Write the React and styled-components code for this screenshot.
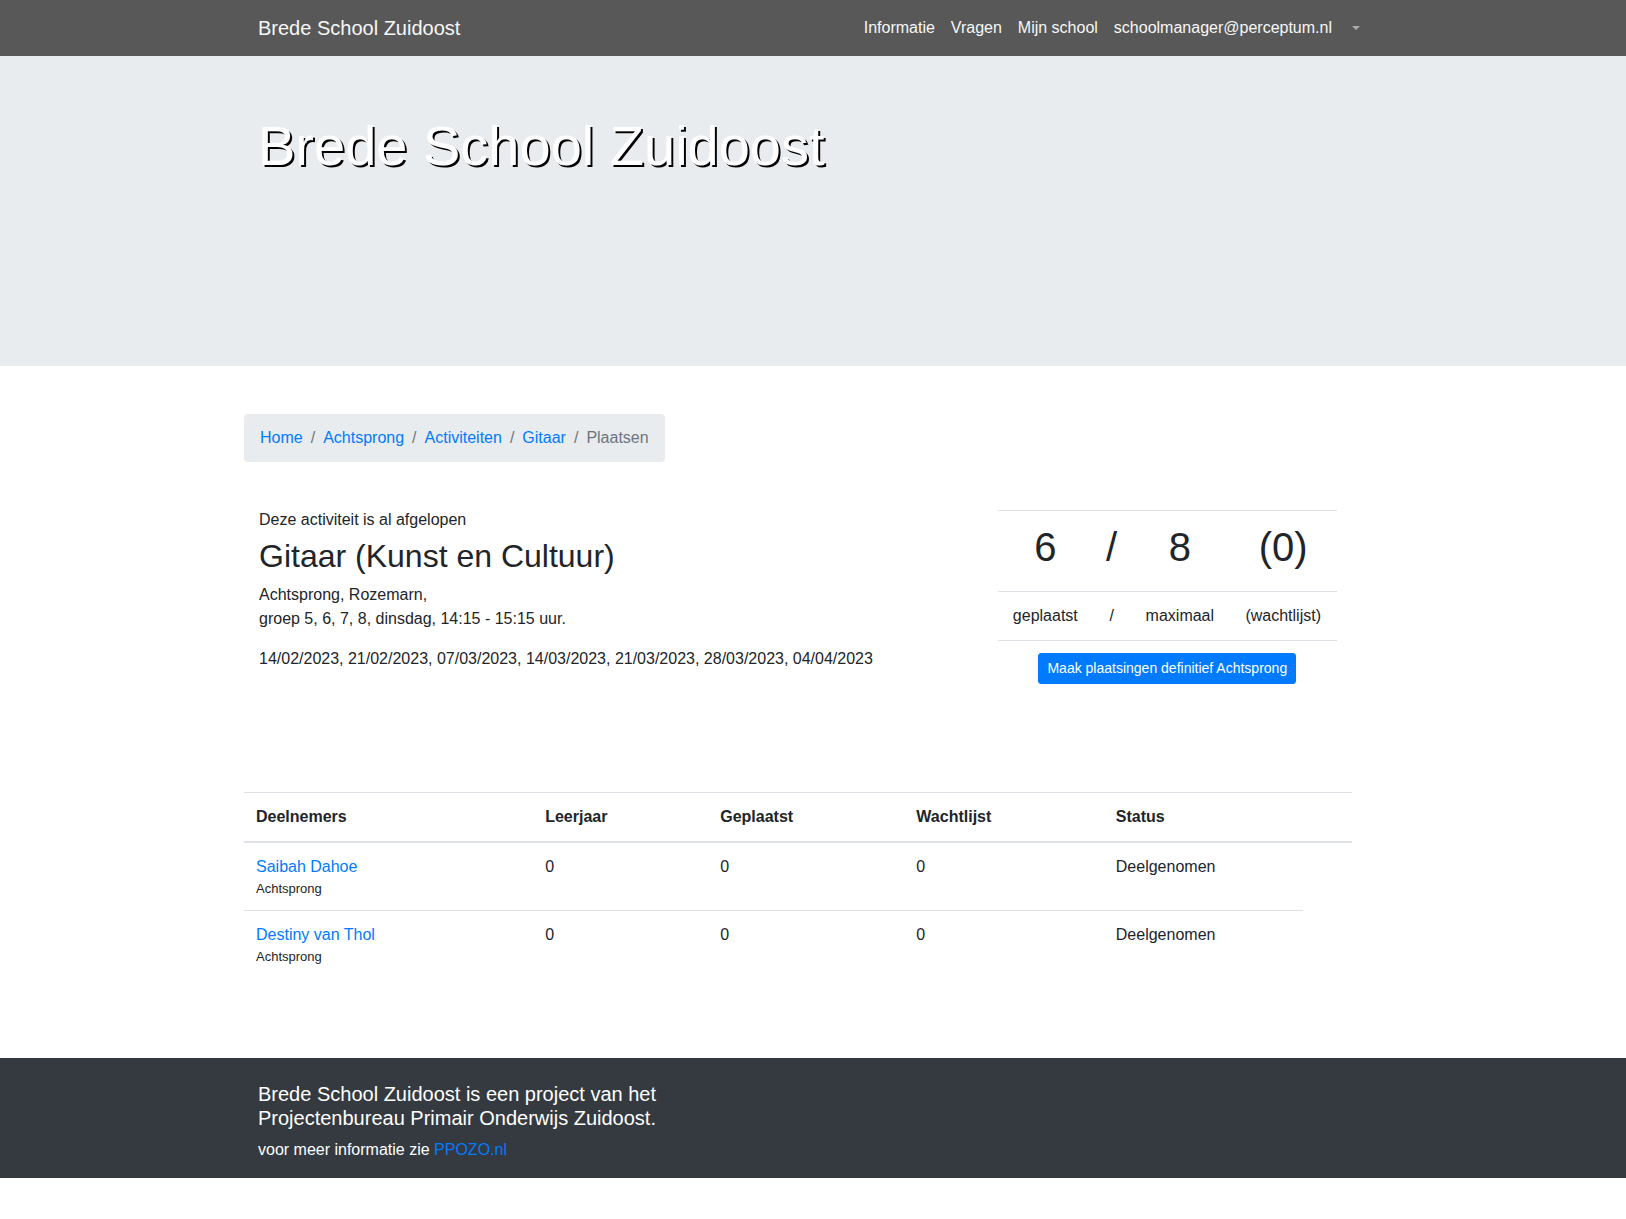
import React from "react";
import styled, { createGlobalStyle } from "styled-components";

const GlobalStyle = createGlobalStyle`
  *, *::before, *::after { box-sizing: border-box; }
  body {
    margin: 0;
    background: #fff;
    color: #212529;
    font-family: "Liberation Sans", Arial, sans-serif;
    font-size: 16px;
    line-height: 24px;
  }
`;

const Container = styled.div`
  width: 100%;
  max-width: 1140px;
  margin: 0 auto;
  padding: 0 ${(p) => p.$gutter || 15}px;
`;

const Navbar = styled.nav`
  background: #585858;
  padding: 8px 0;
`;

const NavInner = styled(Container)`
  display: flex;
  align-items: center;
  justify-content: space-between;
`;

const Brand = styled.a`
  color: #f7f7f7;
  font-size: 20px;
  line-height: 30px;
  text-decoration: none;
`;

const NavList = styled.ul`
  display: flex;
  margin: 0;
  padding: 0;
  list-style: none;
`;

const NavLink = styled.a`
  display: block;
  padding: 8px;
  color: #f7f7f7;
  text-decoration: none;
`;

const MenuToggle = styled.button`
  display: flex;
  align-items: center;
  height: 40px;
  padding: 0 8px 0 12px;
  border: 0;
  background: none;
  color: #ababab;
  cursor: pointer;

  &::after {
    content: "";
    border-top: 4px solid;
    border-left: 4px solid transparent;
    border-right: 4px solid transparent;
  }
`;

const Hero = styled.header`
  min-height: 310px;
  padding: 56px 0;
  background: #e9ecef;
`;

const HeroTitle = styled.h1`
  margin: 0;
  color: #fff;
  font-size: 56px;
  font-weight: 300;
  line-height: 67px;
  text-shadow: 2px 2px #000;
`;

const Main = styled.main`
  padding: 48px 0 80px;
`;

const Row = styled.div`
  display: flex;
  flex-wrap: wrap;
  width: 100%;
  margin: 0 0 ${(p) => p.$space || 0}px -15px;
`;

const Breadcrumb = styled.ol`
  display: flex;
  flex-wrap: wrap;
  margin: 0;
  padding: 12px 16px;
  border-radius: 4px;
  background: #e9ecef;
  list-style: none;
`;

const Crumb = styled.li`
  color: #6c757d;

  & + &::before {
    content: "/";
    padding: 0 8px;
  }
`;

const Link = styled.a`
  color: #007bff;
  text-decoration: none;
`;

const Column = styled.div`
  width: calc(100% * ${(p) => p.$span} / 12);
  padding: ${(p) => p.$top || 0}px 15px 0;
`;

const Notice = styled.p`
  margin: 0 0 5px;
`;

const Title = styled.h2`
  margin: 0 0 8px;
  font-size: 32px;
  font-weight: 500;
  line-height: 38px;
`;

const Paragraph = styled.p`
  margin: 0 0 16px;
`;

const Table = styled.table`
  width: 100%;
  border-collapse: separate;
  border-spacing: 0;
  text-align: ${(p) => p.$align || "left"};
`;

const Col = styled.col`
  width: ${(p) => p.$width}%;
`;

const Cell = styled.td`
  padding: 12px;
  border-top: 1px solid #dee2e6;
  vertical-align: top;

  thead + tbody tr:first-child & {
    border-top: 0;
  }
`;

const HeadCell = styled(Cell)`
  border-bottom: 2px solid #dee2e6;
  font-weight: 700;
`;

const Count = styled.div`
  margin-bottom: 8px;
  font-size: 40px;
  line-height: 48px;
`;

const PrimaryButton = styled.button`
  display: block;
  margin: 0 auto;
  padding: 4px 8px;
  border: 1px solid #007bff;
  border-radius: 3px;
  background: #007bff;
  color: #fff;
  font-family: inherit;
  font-size: 14px;
  line-height: 21px;
  cursor: pointer;
`;

const Small = styled.div`
  font-size: 13px;
  line-height: 19px;
`;

const Footer = styled.footer`
  padding: 24px 0 16px;
  background: #343a40;
  color: #fff;
`;

const FooterTitle = styled.h5`
  margin: 0 0 8px;
  font-size: 20px;
  font-weight: 500;
  line-height: 24px;
`;

const navLinks = ["Informatie", "Vragen", "Mijn school", "schoolmanager@perceptum.nl"];
const crumbs = ["Home", "Achtsprong", "Activiteiten", "Gitaar"];
const counts = ["6", "/", "8", "(0)"];
const countLabels = ["geplaatst", "/", "maximaal", "(wachtlijst)"];
const countWidths = [28.1, 11, 29.2, 31.7];
const columns = ["Deelnemers", "Leerjaar", "Geplaatst", "Wachtlijst", "Status"];
const columnWidths = [26.1, 15.8, 17.7, 18, 18, 4.4];
const participants = [
  { name: "Saibah Dahoe", school: "Achtsprong", values: ["0", "0", "0", "Deelgenomen"] },
  { name: "Destiny van Thol", school: "Achtsprong", values: ["0", "0", "0", "Deelgenomen"] },
];

export default function App() {
  return (
    <>
      <GlobalStyle />
      <Navbar>
        <NavInner>
          <Brand href="#">Brede School Zuidoost</Brand>
          <NavList>
            {navLinks.map((label) => (
              <li key={label}>
                <NavLink href="#">{label}</NavLink>
              </li>
            ))}
            <li>
              <MenuToggle type="button" aria-label="Menu" />
            </li>
          </NavList>
        </NavInner>
      </Navbar>

      <Hero>
        <Container>
          <HeroTitle>Brede School Zuidoost</HeroTitle>
        </Container>
      </Hero>

      <Main>
        <Container $gutter={16}>
          <Row as="nav" aria-label="breadcrumb" $space={46}>
            <Breadcrumb>
              {crumbs.map((label) => (
                <Crumb key={label}>
                  <Link href="#">{label}</Link>
                </Crumb>
              ))}
              <Crumb aria-current="page">Plaatsen</Crumb>
            </Breadcrumb>
          </Row>

          <Row $space={96}>
            <Column $span={8}>
              <Notice>Deze activiteit is al afgelopen</Notice>
              <Title>Gitaar (Kunst en Cultuur)</Title>
              <Paragraph>
                Achtsprong, Rozemarn,
                <br />
                groep 5, 6, 7, 8, dinsdag, 14:15 - 15:15 uur.
              </Paragraph>
              <Paragraph>
                14/02/2023, 21/02/2023, 07/03/2023, 14/03/2023, 21/03/2023, 28/03/2023, 04/04/2023
              </Paragraph>
            </Column>
            <Column $span={4} $top={2}>
              <Table $align="center">
                <colgroup>
                  {countWidths.map((width, i) => (
                    <Col key={i} $width={width} />
                  ))}
                </colgroup>
                <tbody>
                  <tr>
                    {counts.map((value) => (
                      <Cell key={value}>
                        <Count>{value}</Count>
                      </Cell>
                    ))}
                  </tr>
                  <tr>
                    {countLabels.map((label) => (
                      <Cell key={label}>{label}</Cell>
                    ))}
                  </tr>
                  <tr>
                    <Cell colSpan={4}>
                      <PrimaryButton type="button">Maak plaatsingen definitief Achtsprong</PrimaryButton>
                    </Cell>
                  </tr>
                </tbody>
              </Table>
            </Column>
          </Row>

          <Row>
            <Table>
              <colgroup>
                {columnWidths.map((width, i) => (
                  <Col key={i} $width={width} />
                ))}
              </colgroup>
              <thead>
                <tr>
                  {columns.map((label) => (
                    <HeadCell as="th" scope="col" key={label}>
                      {label}
                    </HeadCell>
                  ))}
                  <HeadCell />
                </tr>
              </thead>
              <tbody>
                {participants.map((person) => (
                  <tr key={person.name}>
                    <Cell>
                      <Link href="#">{person.name}</Link>
                      <Small>{person.school}</Small>
                    </Cell>
                    {person.values.map((value, i) => (
                      <Cell key={columns[i + 1]}>{value}</Cell>
                    ))}
                  </tr>
                ))}
              </tbody>
            </Table>
          </Row>
        </Container>
      </Main>

      <Footer>
        <Container>
          <FooterTitle>
            Brede School Zuidoost is een project van het
            <br />
            Projectenbureau Primair Onderwijs Zuidoost.
          </FooterTitle>
          <div>
            voor meer informatie zie <Link href="#">PPOZO.nl</Link>
          </div>
        </Container>
      </Footer>
    </>
  );
}
